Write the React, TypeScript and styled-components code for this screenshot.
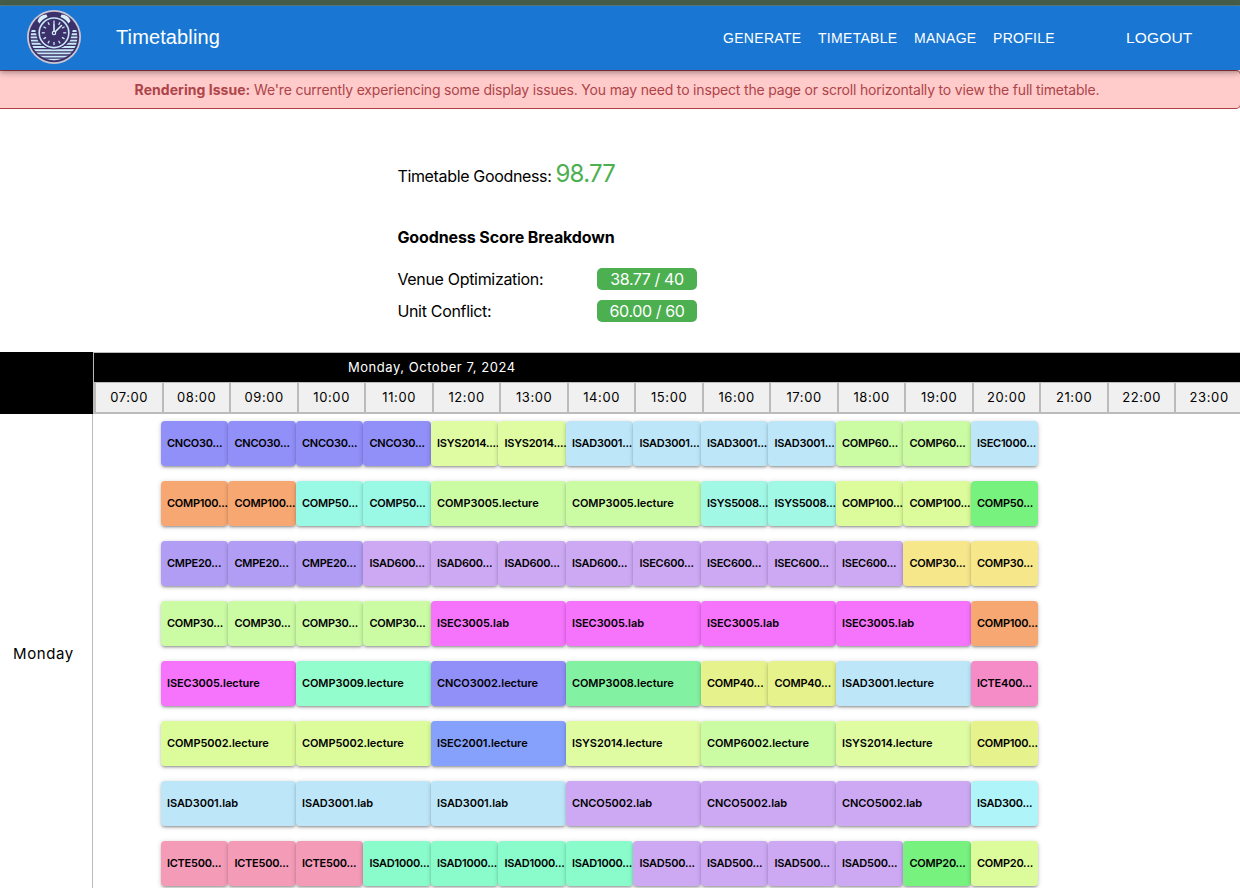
import React from 'react';
import styled, { createGlobalStyle } from 'styled-components';

const GlobalStyle = createGlobalStyle`
  *, *::before, *::after { box-sizing: border-box; }
  html, body { margin: 0; height: 888px; overflow: hidden; background: #fff; }
  body { font-family: Inter, 'Liberation Sans', sans-serif; color: #000; }
`;

const Page = styled.div`
  width: 1240px;
  height: 888px;
  overflow: hidden;
  display: flex;
  flex-direction: column;
`;

const TopStrip = styled.div`
  flex: none;
  height: 6px;
  background: #465e49;
  border-bottom: 1px solid #587d83;
`;

const AppBar = styled.header`
  flex: none;
  position: relative;
  z-index: 1;
  height: 64px;
  padding-left: 27px;
  display: flex;
  align-items: center;
  background: #1976d2;
  color: #fff;
  font-family: 'Liberation Sans', sans-serif;
  box-shadow: 0 2px 4px -1px rgba(0, 0, 0, 0.2), 0 4px 5px rgba(0, 0, 0, 0.14), 0 1px 10px rgba(0, 0, 0, 0.12);
`;

const Logo = styled.svg`
  display: block;
  width: 54px;
  height: 54px;
  margin-right: 35px;
  margin-bottom: 2px;
`;

const Brand = styled.div`
  width: 607px;
  font-size: 20px;
  line-height: 32px;
  letter-spacing: 0.12px;
  padding-bottom: 2px;
`;

const Nav = styled.nav`
  display: grid;
  grid-template-columns: 95px 96px 79px 133px auto;
  align-items: center;
`;

const NavLink = styled.a<{ $large?: boolean }>`
  font-size: ${(p) => (p.$large ? 15.5 : 14)}px;
  line-height: 24px;
  letter-spacing: ${(p) => (p.$large ? 0.15 : 0.3)}px;
`;

const Banner = styled.div`
  flex: none;
  height: 39px;
  margin-right: -1px;
  padding-right: 6px;
  display: flex;
  align-items: center;
  justify-content: center;
  background: #ffcbcb;
  border: 1px solid #ae4145;
  border-left: 0;
  border-radius: 0 5px 5px 0;
  color: #ae4448;
  font-size: 14px;
  letter-spacing: -0.177px;
  white-space: pre;
`;

const Strong = styled.strong`
  font-weight: 700;
  letter-spacing: 0.04px;
`;

const Summary = styled.section`
  flex: none;
  height: 243px;
  padding: 49px 0 0 397.4px;
  font-size: 16px;
`;

const Goodness = styled.div`
  height: 32px;
  display: flex;
  align-items: baseline;
  line-height: 32px;
  letter-spacing: -0.34px;
`;

const Score = styled.span`
  margin-left: 4px;
  color: #4caf50;
  font-size: 24px;
  letter-spacing: -0.75px;
`;

const Heading = styled.h4`
  margin: 35px 0 19px;
  font-size: 16px;
  font-weight: 700;
  line-height: 24px;
  letter-spacing: -0.11px;
`;

const Metric = styled.div`
  display: grid;
  grid-template-columns: 199.6px 100px;
  align-items: center;
  height: 22px;
  margin-bottom: 10px;
  letter-spacing: -0.32px;
`;

const Badge = styled.span`
  height: 22px;
  border-radius: 5px;
  background: #4caf50;
  color: #fff;
  text-align: center;
  line-height: 22px;
  letter-spacing: -0.4px;
`;

const Timeline = styled.main`
  flex: none;
  display: grid;
  grid-template-columns: 93px 1147px;
  grid-template-rows: 62px 474px;
`;

const Corner = styled.div`
  background: #000;
`;

const Header = styled.div`
  overflow: hidden;
  border-left: 1px solid #bbb;
  border-top: 1px solid #bbb;
`;

const DateBar = styled.div`
  height: 29px;
  padding-left: 254px;
  background: #000;
  color: #fff;
  font-size: 13px;
  line-height: 29px;
  letter-spacing: 0.54px;
`;

const Hours = styled.div`
  display: grid;
  grid-template-columns: repeat(17, 67.5px);
  height: 32px;
  width: 1148px;
  padding-left: 0.4px;
  border-top: 1px solid #bbb;
  border-bottom: 2px solid #bbb;
  background: #f0f0f0;
`;

const Hour = styled.div`
  border-left: 2px solid #bbb;
  text-align: center;
  font-size: 13px;
  line-height: 29px;
  letter-spacing: 0.6px;
`;

const DayLabel = styled.div`
  height: 478px;
  padding-left: 13px;
  display: flex;
  align-items: center;
  border-right: 1px solid #bbb;
  font-size: 15px;
  letter-spacing: 0.6px;
`;

const Lanes = styled.div`
  padding: 7px 0 0 67.9px;
  height: 474px;
  overflow: hidden;
`;

const Lane = styled.div`
  display: grid;
  grid-template-columns: repeat(13, 67.5px);
  height: 60px;
`;

const Session = styled.div<{ $span: number; $color: string }>`
  grid-column: span ${(p) => p.$span};
  height: 45px;
  padding-left: 6px;
  border-radius: 4px;
  background: ${(p) => p.$color};
  box-shadow: 0 1px 5px rgba(0, 0, 0, 0.2), 0 2px 2px rgba(0, 0, 0, 0.14), 0 3px 1px -2px rgba(0, 0, 0, 0.12);
  font-size: 11px;
  font-weight: 600;
  letter-spacing: ${(p) => (p.$span > 1 ? -0.05 : -0.23)}px;
  line-height: 45px;
  white-space: nowrap;
`;

const color = {
  periwinkle: '#918ff8',
  orange: '#f7a772',
  aqua: '#9af9e4',
  lime: '#cbfca4',
  citron: '#dffca3',
  sky: '#bde7f9',
  pear: '#dcfc9b',
  green: '#77f27f',
  iris: '#b19df4',
  lilac: '#cda9f4',
  sand: '#f7e78b',
  magenta: '#f673fc',
  mint: '#94fdce',
  jade: '#82f1a1',
  straw: '#e6f28b',
  pink: '#f58cc8',
  blue: '#86a1fc',
  ice: '#aff4f9',
  rose: '#f49bb8',
  seafoam: '#8afccc',
};

type Entry = [label: string, color: string, span?: number, repeat?: number];

const lanes: Entry[][] = [
  [
    ['CNCO30...', color.periwinkle, 1, 4],
    ['ISYS2014....', color.citron, 1, 2],
    ['ISAD3001...', color.sky, 1, 4],
    ['COMP60...', color.lime, 1, 2],
    ['ISEC1000...', color.sky],
  ],
  [
    ['COMP100...', color.orange, 1, 2],
    ['COMP50...', color.aqua, 1, 2],
    ['COMP3005.lecture', color.lime, 2, 2],
    ['ISYS5008...', '#a1f9e5', 1, 2],
    ['COMP100...', color.pear, 1, 2],
    ['COMP50...', color.green],
  ],
  [
    ['CMPE20...', color.iris, 1, 3],
    ['ISAD600...', color.lilac, 1, 4],
    ['ISEC600...', color.lilac, 1, 4],
    ['COMP30...', color.sand, 1, 2],
  ],
  [
    ['COMP30...', color.lime, 1, 4],
    ['ISEC3005.lab', color.magenta, 2, 4],
    ['COMP100...', color.orange],
  ],
  [
    ['ISEC3005.lecture', color.magenta, 2],
    ['COMP3009.lecture', color.mint, 2],
    ['CNCO3002.lecture', color.periwinkle, 2],
    ['COMP3008.lecture', color.jade, 2],
    ['COMP40...', color.straw, 1, 2],
    ['ISAD3001.lecture', color.sky, 2],
    ['ICTE400...', color.pink],
  ],
  [
    ['COMP5002.lecture', color.pear, 2, 2],
    ['ISEC2001.lecture', color.blue, 2],
    ['ISYS2014.lecture', color.citron, 2],
    ['COMP6002.lecture', color.lime, 2],
    ['ISYS2014.lecture', color.citron, 2],
    ['COMP100...', color.straw],
  ],
  [
    ['ISAD3001.lab', color.sky, 2, 3],
    ['CNCO5002.lab', color.lilac, 2, 3],
    ['ISAD300...', color.ice],
  ],
  [
    ['ICTE500...', color.rose, 1, 3],
    ['ISAD1000...', color.seafoam, 1, 4],
    ['ISAD500...', color.lilac, 1, 4],
    ['COMP20...', color.green],
    ['COMP20...', color.pear],
  ],
];

const hours = Array.from({ length: 17 }, (_, i) => `${String(i + 7).padStart(2, '0')}:00`);

const stripes = [21, 24.2, 27.4, 30.6, 33.8, 37, 40.2, 43.4, 46.6, 49.8];

function ClockLogo() {
  return (
    <Logo viewBox="0 0 54 54">
      <defs>
        <clipPath id="disc">
          <circle cx="27" cy="27" r="23.4" />
        </clipPath>
      </defs>
      <circle cx="27" cy="27" r="27" fill="#cbc6d2" />
      <circle cx="27" cy="27" r="25.2" fill="#3b3069" />
      <g clipPath="url(#disc)" stroke="#c9e8f7" strokeWidth="1.9">
        {stripes.map((y) => (
          <line key={y} x1="2" x2="52" y1={y} y2={y} />
        ))}
      </g>
      <path d="M8 19 L13 8 H41 L46 19 L43 31 Q36 39.5 27 39.5 Q18 39.5 11 31Z" fill="#3b3069" />
      <path d="M10.5 11 Q12.5 4.5 19.5 4.5 L20.5 7 Q15 9 12.5 13.5Z" fill="#d7effa" />
      <path d="M43.5 11 Q41.5 4.5 34.5 4.5 L33.5 7 Q39 9 41.5 13.5Z" fill="#d7effa" />
      <circle cx="27" cy="22.8" r="14.8" fill="#3b3069" stroke="#c9e8f7" strokeWidth="1.6" />
      <g stroke="#c9e8f7" strokeWidth="1.3">
        {hours.slice(0, 12).map((h, i) => (
          <line key={h} x1="27" x2="27" y1="10.6" y2="13.6" transform={`rotate(${i * 30} 27 22.8)`} />
        ))}
      </g>
      <g stroke="#d7effa" strokeWidth="1.6" strokeLinecap="round" fill="#3b3069">
        <path d="M27 22.5 V14 M27.5 22.5 L34.5 15.5" />
        <circle cx="27" cy="23" r="1.7" strokeWidth="1.2" />
      </g>
    </Logo>
  );
}

export default function App() {
  return (
    <Page>
      <GlobalStyle />
      <TopStrip />
      <AppBar>
        <ClockLogo />
        <Brand>Timetabling</Brand>
        <Nav>
          <NavLink>GENERATE</NavLink>
          <NavLink>TIMETABLE</NavLink>
          <NavLink>MANAGE</NavLink>
          <NavLink>PROFILE</NavLink>
          <NavLink $large>LOGOUT</NavLink>
        </Nav>
      </AppBar>
      <Banner>
        <Strong>Rendering Issue:</Strong>
        <span> We're currently experiencing some display issues. You may need to inspect the page or scroll horizontally to view the full timetable.</span>
      </Banner>
      <Summary>
        <Goodness>
          <span>Timetable Goodness:</span>
          <Score>98.77</Score>
        </Goodness>
        <Heading>Goodness Score Breakdown</Heading>
        <Metric>
          <span>Venue Optimization:</span>
          <Badge>38.77 / 40</Badge>
        </Metric>
        <Metric>
          <span>Unit Conflict:</span>
          <Badge>60.00 / 60</Badge>
        </Metric>
      </Summary>
      <Timeline>
        <Corner />
        <Header>
          <DateBar>Monday, October 7, 2024</DateBar>
          <Hours>
            {hours.map((h) => (
              <Hour key={h}>{h}</Hour>
            ))}
          </Hours>
        </Header>
        <DayLabel>Monday</DayLabel>
        <Lanes>
          {lanes.map((entries, row) => (
            <Lane key={row}>
              {entries.flatMap(([label, fill, span = 1, repeat = 1], i) =>
                Array.from({ length: repeat }, (_, n) => (
                  <Session key={`${i}-${n}`} $span={span} $color={fill}>
                    {label}
                  </Session>
                )),
              )}
            </Lane>
          ))}
        </Lanes>
      </Timeline>
    </Page>
  );
}
